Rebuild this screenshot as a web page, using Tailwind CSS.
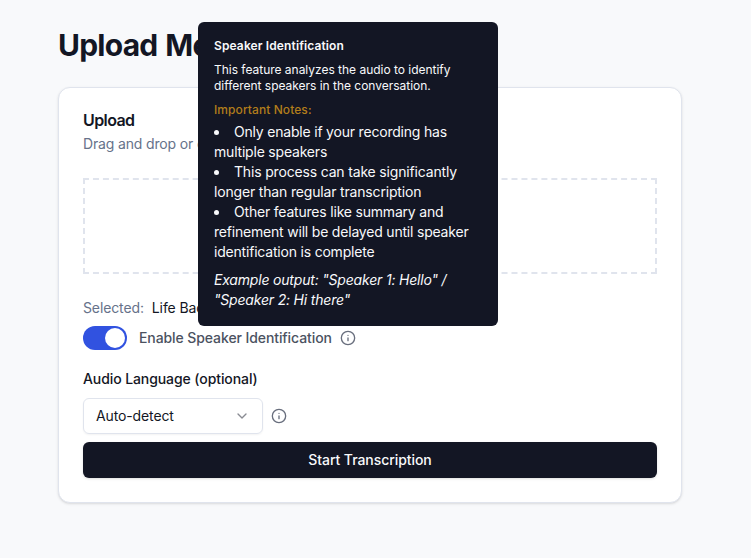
<!DOCTYPE html>
<html lang="en">
<head>
<meta charset="utf-8">
<title>Upload Media</title>
<script src="https://cdn.jsdelivr.net/npm/@tailwindcss/browser@4"></script>
</head>
<body class="h-[558px] overflow-hidden bg-[#f8f9fb] font-['Inter',sans-serif] text-sm text-[#131624]">
<main class="relative mx-auto w-[624px] -left-[5.5px] pt-[27px]">
  <h1 class="mb-6 text-[30px] leading-9 font-bold tracking-tight [word-spacing:1.5px]">Upload Media</h1>
  <section class="rounded-xl border border-[#e0e4ed] bg-white p-6 shadow-sm">
    <h2 class="text-base leading-4 font-semibold tracking-[-0.6px]">Upload</h2>
    <p class="mt-1.5 tracking-[-0.15px] text-[#66728a]">Drag and drop or click to upload</p>
    <div class="mt-6 h-24 border-2 border-dashed border-[#e0e4ed]"></div>
    <p class="mt-6 flex gap-2 tracking-[-0.12px]"><span class="text-[#66728a]">Selected:</span><span>Life Back Story.mp3</span></p>
    <div class="mt-2 flex h-6 items-center">
      <span class="flex h-6 w-11 items-center justify-end rounded-full bg-[#3152e0] p-0.5"><span class="size-5 rounded-full bg-white"></span></span>
      <span class="ml-3 font-medium tracking-[-0.09px] text-[#4b5261]">Enable Speaker Identification</span>
      <svg class="ml-2 size-4 text-[#686e7d]" viewBox="0 0 24 24" fill="none" stroke="currentColor" stroke-width="2" stroke-linecap="round" stroke-linejoin="round"><circle cx="12" cy="12" r="10"/><path d="M12 16v-4M12 8h.01"/></svg>
    </div>
    <div class="mt-[22px] leading-[14px] font-medium tracking-[-0.09px]">Audio Language (optional)</div>
    <div class="mt-3 flex items-center gap-2">
      <div class="flex h-9 w-[180px] items-center justify-between rounded-md border border-[#e0e4ed] px-3 shadow-xs">
        <span class="tracking-[-0.12px]">Auto-detect</span>
        <svg class="size-4 text-[#898b92]" viewBox="0 0 24 24" fill="none" stroke="currentColor" stroke-width="2" stroke-linecap="round" stroke-linejoin="round"><path d="m6 9 6 6 6-6"/></svg>
      </div>
      <svg class="size-4 text-[#686e7d]" viewBox="0 0 24 24" fill="none" stroke="currentColor" stroke-width="2" stroke-linecap="round" stroke-linejoin="round"><circle cx="12" cy="12" r="10"/><path d="M12 16v-4M12 8h.01"/></svg>
    </div>
    <button class="mt-2 block h-9 w-full rounded-md bg-[#131624] font-medium tracking-[-0.06px] text-[#f8f9fb] shadow-sm">Start Transcription</button>
  </section>
</main>
<div role="tooltip" class="absolute top-[22px] left-[198px] w-[300px] rounded-md bg-[#131624] p-4 text-[#f8f9fb]">
  <p class="text-xs font-semibold tracking-[0.12px]">Speaker Identification</p>
  <p class="mt-2 text-xs tracking-[-0.02px]">This feature analyzes the audio to identify different speakers in the conversation.</p>
  <p class="mt-2 text-xs font-medium tracking-[0.08px] text-[#b27d1b]">Important Notes:</p>
  <ul class="mt-1 list-inside list-disc tracking-[-0.2px]">
    <li>Only enable if your recording has multiple speakers</li>
    <li class="tracking-[-0.17px]">This process can take significantly longer than regular transcription</li>
    <li>Other features like summary and refinement will be delayed until speaker identification is complete</li>
  </ul>
  <p class="mt-2 italic tracking-[-0.19px]">Example output: "Speaker 1: Hello" / "Speaker 2: Hi there"</p>
</div>
</body>
</html>
